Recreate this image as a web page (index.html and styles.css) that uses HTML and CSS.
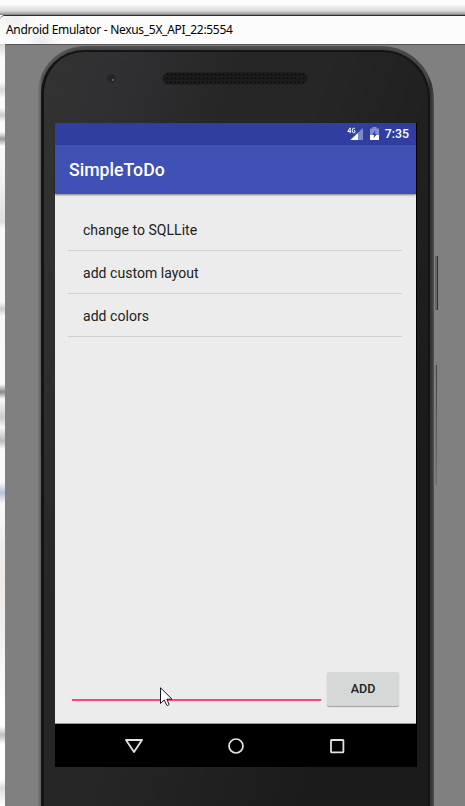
FILE: index.html
```html
<!DOCTYPE html>
<html lang="en">
<head>
<meta charset="utf-8">
<title>Android Emulator - Nexus_5X_API_22:5554</title>
<link rel="stylesheet" href="styles.css">
</head>
<body>
<div class="desktop-top"></div>
<div class="window">
  <header class="titlebar"><span>Android Emulator - Nexus_5X_API_22:5554</span></header>
  <div class="workspace">
    <div class="desktop-left"></div>
    <main class="stage">
      <div class="phone">
        <div class="body">
          <div class="bezel-top">
            <i class="camera"></i>
            <svg class="speaker" width="146" height="13" viewBox="0 0 146 13">
              <defs><pattern id="holes" width="4" height="4" patternUnits="userSpaceOnUse"><rect x="1" y="2" width="1" height="1" fill="#000"/></pattern></defs>
              <rect x=".5" y=".5" width="145" height="12" rx="6" fill="#1b1b1b"/>
              <rect x="3" y="0" width="140" height="12" fill="url(#holes)"/>
            </svg>
          </div>
          <div class="screen">
            <div class="statusbar">
              <svg class="signal" width="17" height="15" viewBox="0 0 17 15">
                <path d="M16 1v12H3z" fill="#7f89c9"/>
                <path d="M11 6v7H3.500z" fill="#fff"/>
                <path d="M3.200 .8L.8 4.500h3.400M3.200 .8v5.400M7.800 1.600C6.800 .5 5.300 1 5.300 3.500s1.500 3 2.600 2V3.600H6.800" fill="none" stroke="#303f9f" stroke-width="2.500"/>
                <path d="M3.200 .8L.8 4.500h3.400M3.200 .8v5.400M7.800 1.600C6.800 .5 5.300 1 5.300 3.500s1.500 3 2.600 2V3.600H6.800" fill="none" stroke="#fff" stroke-width="1"/>
              </svg>
              <svg class="battery" width="9" height="14" viewBox="0 0 9 14">
                <path d="M2.500 0h4v1.500H9V8H0V1.500h2.500z" fill="#8790cc"/>
                <path d="M0 8h9v5H0z" fill="#fff"/>
                <path d="M5.500 3.200L2 7.700h2.200L3.500 11.300 7 6.900H4.900z" fill="#303f9f"/>
              </svg>
              <span class="clock">7:35</span>
            </div>
            <div class="appbar"><h1>SimpleToDo</h1></div>
            <div class="content">
              <ul class="todos">
                <li>change to SQLLite</li>
                <li>add custom layout</li>
                <li>add colors</li>
              </ul>
              <div class="entry">
                <div class="field"></div>
                <button class="add">ADD</button>
                <svg class="cursor" width="13" height="20" viewBox="0 0 13 20">
                  <path d="M.5 .8V16.500L4.200 13l2.600 5.300c.8 .6 2.400-.2 2.200-1.200L6.800 12.200H12z" fill="#fff" stroke="#15151f" stroke-width="1"/>
                </svg>
              </div>
            </div>
            <nav class="navbar">
              <svg width="20" height="16" viewBox="0 0 20 16"><path d="M2 2h16L10 14z" fill="none" stroke="#e2e2e2" stroke-width="1.800" stroke-linejoin="round"/></svg>
              <svg width="20" height="16" viewBox="0 0 20 16"><circle cx="10" cy="8" r="7" fill="none" stroke="#e2e2e2" stroke-width="1.700"/></svg>
              <svg width="20" height="16" viewBox="0 0 20 16"><rect x="4" y="2" width="12.400" height="12.400" rx=".6" fill="none" stroke="#e2e2e2" stroke-width="1.800"/></svg>
            </nav>
          </div>
        </div>
      </div>
      <i class="key power"></i>
      <i class="key volume"></i>
    </main>
  </div>
</div>
</body>
</html>
```
FILE: styles.css
```css
* { box-sizing: border-box; }
html, body { height: 100%; margin: 0; }
body {
  display: flex;
  flex-direction: column;
  overflow: hidden;
  background: #fcfcfc;
  font-family: Roboto, sans-serif;
}
.desktop-top {
  flex: none;
  height: 15px;
  background: linear-gradient(#fcfcfc 0 5px, #f0f0f0 6px, #d8d8d8 11px, #a0a0a0 14px, #777 15px);
}
.window {
  flex: 1;
  display: flex;
  flex-direction: column;
  min-height: 0;
  border-top: 1px solid #2c2a2c;
  border-top-left-radius: 5px;
}
.titlebar {
  flex: none;
  height: 28px;
  padding-left: 6px;
  background: radial-gradient(circle at 14px 0, #ededed, transparent 22px), radial-gradient(circle at 42px 26px, #eaeaea, transparent 18px), #fcfcfc;
  border-top-left-radius: 5px;
  color: #000;
  font: 12px/27px "Noto Sans", sans-serif;
  letter-spacing: -0.3px;
  white-space: nowrap;
}
.workspace { flex: 1; display: flex; min-height: 0; }
.desktop-left {
  flex: none;
  width: 5px;
  background: linear-gradient(#d8d8d8 0, #fafafa 14px, #fafafa 38px, #d8d8d8 46px, #fafafa 54px, #fafafa 64px, #ccc 71px, #fafafa 78px, #fafafa 88px, #999 95px, #fafafa 102px, #f0f0f0 140px, #dedede 178px, #f8f8f8 184px, #f8f8f8 258px, #ccc 265px, #f8f8f8 272px, #fafafa 340px, #888 348px, #f8f8f8 355px, #ccc 374px, #f8f8f8 383px, #bbb 397px, #fafafa 405px, #fafafa 438px, #b8c2d8 449px, #fafafa 460px, #eee 500px, #f2e9e2 540px, #eee 580px, #fff 660px, #fff 682px, #b8bdbd 691px, #fff 700px, #fff 735px, #ddd 744px, #fff 762px);
}
.stage {
  flex: 1;
  position: relative;
  border-top: 1px solid #555;
  background: #808080;
  padding-left: 33px;
  overflow: hidden;
}
.phone {
  width: 396px;
  height: 820px;
  margin-top: 1px;
  padding: 4px 4px 0 3px;
  border-radius: 47px 53px 0 0;
  background: linear-gradient(90deg, #6c6c6c 0, #626262 2px, #444 4px, #444 390px, #303030 392px, #3b3b3b 394px, #555 396px);
  box-shadow: inset 3px 1px 4px #8a8a8a55;
}
.body {
  height: 100%;
  padding: 0 11px;
  border: solid #141414;
  border-width: 2px 2px 0 3px;
  border-radius: 43px 48px 0 0;
  background: linear-gradient(108deg, #333 0, #2f2e31 90px, #262626 190px, #262626 270px, #1b1b1b 480px);
}
.bezel-top {
  display: flex;
  height: 71px;
  padding-top: 20px;
}
.camera {
  width: 9px;
  height: 9px;
  margin: 2px 0 0 52px;
  border-radius: 50%;
  background: radial-gradient(circle at 6px 6px, #6a5654 0 1px, #262626 1.500px);
}
.speaker { margin-left: 46px; }
.screen {
  display: flex;
  flex-direction: column;
  width: 362px;
  height: 644px;
  border-right: 1px solid #000;
  background: #ececec;
}
.statusbar {
  display: flex;
  flex: none;
  align-items: center;
  justify-content: flex-end;
  height: 22px;
  padding-right: 7px;
  background: #303f9f;
  color: #fff;
}
.battery { margin: 0 6px 0 6px; }
.clock { font-size: 12.300px; font-weight: 500; }
.appbar {
  flex: none;
  height: 49px;
  padding-left: 14px;
  background: #3f51b5;
  box-shadow: 0 1px 2px #0007;
  color: #fff;
}
h1 { margin: 0; font-size: 17.700px; font-weight: 500; line-height: 51px; }
.content {
  display: flex;
  flex: 1;
  flex-direction: column;
  justify-content: space-between;
  padding: 14px 14px 0 13px;
  border-bottom: 1px solid #999;
}
.todos { margin: 0; padding: 0; list-style: none; }
.todos li {
  height: 43px;
  padding-left: 15px;
  border-bottom: 1px solid #d0d0d0;
  color: #212121;
  font-size: 14px;
  letter-spacing: .04px;
  line-height: 44px;
}
.entry { position: relative; display: flex; height: 51px; }
.field {
  width: 249px;
  height: 29px;
  margin-left: 4px;
  border-bottom: 2px solid #f5487f;
}
.add {
  width: 72px;
  height: 34px;
  margin-left: 6px;
  padding: 0;
  border: 0;
  border-radius: 2px;
  background: #d6d7d7;
  box-shadow: 0 1px 1px #0005;
  color: #212121;
  font: 500 12.500px/32px Roboto, sans-serif;
}
.cursor { position: absolute; left: 92px; top: 15px; }
.navbar {
  display: flex;
  flex: none;
  align-items: center;
  justify-content: space-between;
  height: 43px;
  padding: 0 69px;
  background: #000;
}
.key { position: absolute; }
.power { left: 430px; top: 211px; width: 3px; height: 54px; border: solid #303030; border-width: 0 1px 0 0; background: #666; }
.volume { left: 430px; top: 320px; width: 2px; height: 120px; background: linear-gradient(90deg, #777 50%, transparent 50%), linear-gradient(#444, #707070); }
```
